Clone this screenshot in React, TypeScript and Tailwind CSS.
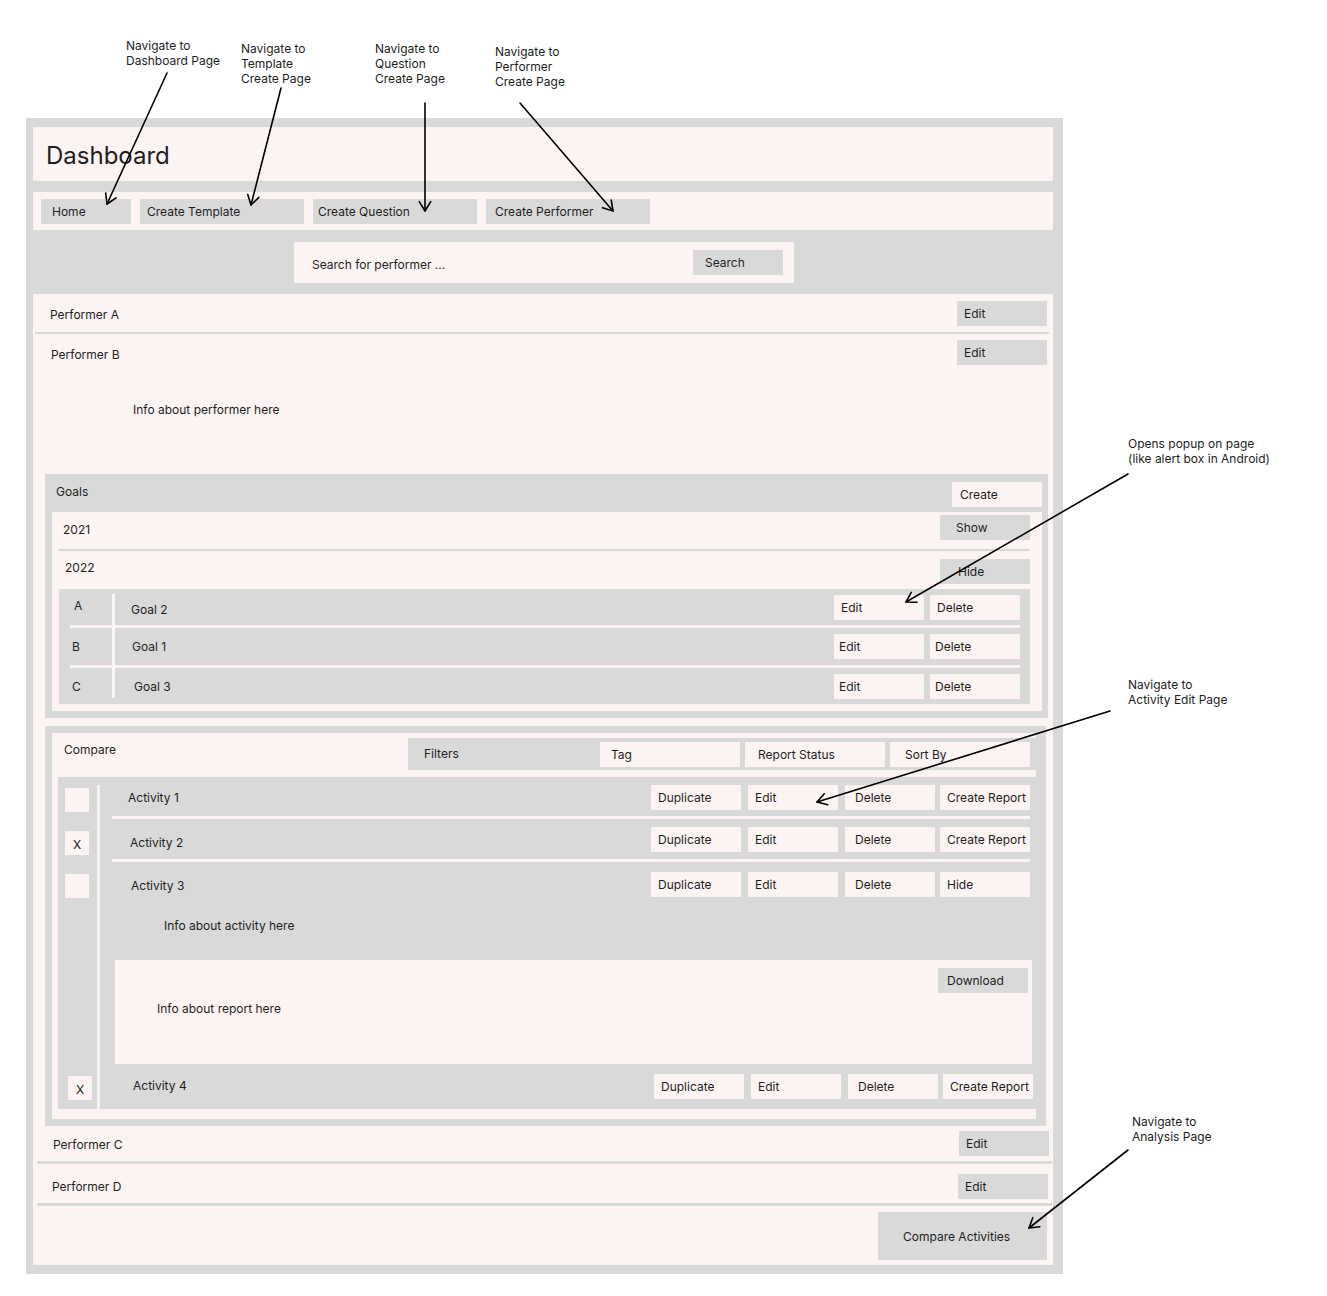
import React from 'react'

type ArrowProps = { x1: number; y1: number; x2: number; y2: number }

function Arrow({ x1, y1, x2, y2 }: ArrowProps) {
  const a = Math.atan2(y2 - y1, x2 - x1)
  const len = 11
  const s = 0.55
  const h1 = `${x2 - len * Math.cos(a - s)},${y2 - len * Math.sin(a - s)}`
  const h2 = `${x2 - len * Math.cos(a + s)},${y2 - len * Math.sin(a + s)}`
  return (
    <g>
      <line x1={x1} y1={y1} x2={x2} y2={y2} />
      <polyline points={`${h1} ${x2},${y2} ${h2}`} fill="none" />
    </g>
  )
}

function Btn({ label, className = '' }: { label: string; className?: string }) {
  return <div className={`h-[25px] w-[90px] shrink-0 flex items-center ${className}`}>{label}</div>
}

function Note({ lines, className }: { lines: string[]; className: string }) {
  return (
    <div className={`absolute ${className}`}>
      {lines.map((l) => (
        <div key={l}>{l}</div>
      ))}
    </div>
  )
}

function ActivityButtons({ last, className = '' }: { last: string; className?: string }) {
  return (
    <div className={`flex ${className}`}>
      <Btn label="Duplicate" className="bg-[#fcf3f3] pl-[7px]" />
      <Btn label="Edit" className="bg-[#fcf3f3] pl-[7px] ml-[7px]" />
      <Btn label="Delete" className="bg-[#fcf3f3] pl-[10px] ml-[7px]" />
      <Btn label={last} className="bg-[#fcf3f3] pl-[7px] ml-[5px]" />
    </div>
  )
}

export default function App() {
  return (
    <div className="relative w-[1327px] h-[1296px] bg-white text-[12px] leading-[15px] text-[#1e1e1e] font-['Inter',sans-serif]">
      {/* annotations */}
      <Note lines={['Navigate to', 'Dashboard Page']} className="left-[126px] top-[38px]" />
      <Note lines={['Navigate to', 'Template', 'Create Page']} className="left-[241px] top-[41px]" />
      <Note lines={['Navigate to', 'Question', 'Create Page']} className="left-[375px] top-[41px]" />
      <Note lines={['Navigate to', 'Performer', 'Create Page']} className="left-[495px] top-[44px]" />
      <Note lines={['Opens popup on page', '(like alert box in Android)']} className="left-[1128px] top-[436px]" />
      <Note lines={['Navigate to', 'Activity Edit Page']} className="left-[1128px] top-[677px]" />
      <Note lines={['Navigate to', 'Analysis Page']} className="left-[1132px] top-[1114px]" />

      <div className="pt-[118px] pl-[26px]">
        <div className="w-[1037px] bg-[#d9d9d9] pt-[9px] pb-[9px] pl-[7px] pr-[10px]">
          {/* title */}
          <div className="h-[54px] bg-[#fcf3f3] flex items-center pl-[13px] pt-[4px] text-[24px] leading-[30px]">Dashboard</div>

          {/* nav */}
          <div className="mt-[11px] h-[38px] bg-[#fcf3f3] flex items-center pl-[8px]">
            <Btn label="Home" className="bg-[#d9d9d9] pl-[11px]" />
            <Btn label="Create Template" className="bg-[#d9d9d9] pl-[7px] w-[164px] ml-[9px]" />
            <Btn label="Create Question" className="bg-[#d9d9d9] pl-[5px] w-[164px] ml-[9px]" />
            <Btn label="Create Performer" className="bg-[#d9d9d9] pl-[9px] w-[164px] ml-[9px]" />
          </div>

          {/* search */}
          <div className="h-[64px] pt-[12px] pl-[261px]">
            <div className="w-[500px] h-[41px] bg-[#fcf3f3] flex items-center justify-between pl-[18px] pr-[11px]">
              <span className="mt-[3px]">Search for performer ...</span>
              <Btn label="Search" className="bg-[#d9d9d9] pl-[12px]" />
            </div>
          </div>

          {/* performers */}
          <div className="bg-[#fcf3f3] pb-[5px]">
            <div className="h-[38px] flex items-center justify-between pl-[17px] pr-[6px]">
              <span className="mt-[3px]">Performer A</span>
              <Btn label="Edit" className="bg-[#d9d9d9] pl-[7px]" />
            </div>
            <div className="h-[2px] bg-[#d9d9d9] ml-[2px] mr-[4px]" />

            <div className="h-[140px]">
              <div className="flex items-center justify-between pt-[6px] pl-[18px] pr-[6px]">
                <span className="mt-[4px]">Performer B</span>
                <Btn label="Edit" className="bg-[#d9d9d9] pl-[7px]" />
              </div>
              <div className="mt-[37px] pl-[100px]">Info about performer here</div>
            </div>

            {/* goals */}
            <div className="ml-[12px] w-[1003px] bg-[#d9d9d9] pb-[7px]">
              <div className="h-[38px] flex items-start justify-between pt-[8px] pl-[11px] pr-[6px]">
                <span className="mt-[2px]">Goals</span>
                <Btn label="Create" className="bg-[#fcf3f3] pl-[8px]" />
              </div>
              <div className="ml-[7px] w-[990px] bg-[#fcf3f3] pb-[7px]">
                <div className="h-[37px] flex items-start justify-between pt-[3px] pl-[11px] pr-[12px]">
                  <span className="mt-[7px]">2021</span>
                  <Btn label="Show" className="bg-[#d9d9d9] pl-[16px]" />
                </div>
                <div className="h-[2px] bg-[#d9d9d9] ml-[6px] mr-[12px]" />
                <div className="h-[38px] flex items-start justify-between pt-[8px] pl-[13px] pr-[12px]">
                  <span className="mt-[1px]">2022</span>
                  <Btn label="Hide" className="bg-[#d9d9d9] pl-[18px]" />
                </div>

                <div className="ml-[7px] w-[971px] bg-[#d9d9d9]">
                  <div className="h-[36px] flex">
                    <div className="w-[53px] pl-[15px] pt-[9px]">A</div>
                    <div className="w-[3px] bg-[#fcf3f3] mt-[5px]" />
                    <div className="flex-1 flex items-center justify-between pl-[16px] pr-[10px]">
                      <span className="mt-[4px]">Goal 2</span>
                      <div className="flex gap-[6px]">
                        <Btn label="Edit" className="bg-[#fcf3f3] pl-[7px]" />
                        <Btn label="Delete" className="bg-[#fcf3f3] pl-[7px]" />
                      </div>
                    </div>
                  </div>
                  <div className="h-[3px] bg-[#fcf3f3] ml-[11px] mr-[10px]" />
                  <div className="h-[37px] flex">
                    <div className="w-[53px] pl-[13px] flex items-center">B</div>
                    <div className="w-[3px] bg-[#fcf3f3]" />
                    <div className="flex-1 flex items-center justify-between pl-[17px] pr-[10px]">
                      <span>Goal 1</span>
                      <div className="flex gap-[6px]">
                        <Btn label="Edit" className="bg-[#fcf3f3] pl-[5px]" />
                        <Btn label="Delete" className="bg-[#fcf3f3] pl-[5px]" />
                      </div>
                    </div>
                  </div>
                  <div className="h-[3px] bg-[#fcf3f3] ml-[11px] mr-[10px]" />
                  <div className="h-[36px] flex">
                    <div className="w-[53px] pl-[13px] flex items-center">C</div>
                    <div className="w-[3px] bg-[#fcf3f3] mb-[6px]" />
                    <div className="flex-1 flex items-center justify-between pl-[19px] pr-[10px]">
                      <span>Goal 3</span>
                      <div className="flex gap-[6px]">
                        <Btn label="Edit" className="bg-[#fcf3f3] pl-[5px]" />
                        <Btn label="Delete" className="bg-[#fcf3f3] pl-[5px]" />
                      </div>
                    </div>
                  </div>
                </div>
              </div>
            </div>

            {/* compare */}
            <div className="mt-[8px] ml-[12px] w-[1001px] bg-[#d9d9d9] pt-[7px] pb-[7px] pl-[7px] pr-[10px]">
              <div className="bg-[#fcf3f3] pb-[10px]">
                <div className="pt-[5px] flex items-start">
                  <span className="pl-[12px] pt-[4px]">Compare</span>
                  <div className="ml-auto w-[628px] h-[32px] bg-[#d9d9d9] flex items-center pl-[16px] pr-[6px]">
                    <span className="-mt-[1px]">Filters</span>
                    <div className="ml-auto flex gap-[5px]">
                      <Btn label="Tag" className="bg-[#fcf3f3] w-[140px] pl-[11px]" />
                      <Btn label="Report Status" className="bg-[#fcf3f3] w-[140px] pl-[13px]" />
                      <Btn label="Sort By" className="bg-[#fcf3f3] w-[140px] pl-[15px]" />
                    </div>
                  </div>
                </div>

                <div className="mt-[7px] ml-[6px] w-[978px] h-[332px] bg-[#d9d9d9] flex">
                  <div className="w-[39px] flex flex-col">
                    <div className="ml-[7px] mt-[11px] w-[24px] h-[24px] bg-[#fcf3f3]" />
                    <div className="ml-[7px] mt-[19px] w-[24px] h-[24px] bg-[#fcf3f3] flex items-center justify-center pt-[3px]">X</div>
                    <div className="ml-[7px] mt-[19px] w-[24px] h-[24px] bg-[#fcf3f3]" />
                    <div className="ml-[10px] mt-auto mb-[9px] w-[24px] h-[24px] bg-[#fcf3f3] flex items-center justify-center pt-[3px]">X</div>
                  </div>
                  <div className="w-[3px] bg-[#fcf3f3] mt-[8px]" />
                  <div className="flex-1 flex flex-col">
                    <div className="h-[39px] flex items-start justify-between pt-[8px] pl-[28px] pr-[6px]">
                      <span className="mt-[5px]">Activity 1</span>
                      <ActivityButtons last="Create Report" />
                    </div>
                    <div className="h-[3px] bg-[#fcf3f3] ml-[12px] mr-[6px]" />
                    <div className="h-[40px] flex items-start justify-between pt-[8px] pl-[30px] pr-[6px]">
                      <span className="mt-[8px]">Activity 2</span>
                      <ActivityButtons last="Create Report" />
                    </div>
                    <div className="h-[3px] bg-[#fcf3f3] ml-[12px] mr-[6px]" />
                    <div className="h-[98px] pt-[10px]">
                      <div className="flex items-start justify-between pl-[31px] pr-[6px]">
                        <span className="mt-[6px]">Activity 3</span>
                        <ActivityButtons last="Hide" />
                      </div>
                      <div className="mt-[21px] pl-[64px]">Info about activity here</div>
                    </div>
                    <div className="h-[104px] ml-[15px] mr-[4px] bg-[#fcf3f3] flex items-start justify-between pt-[8px] pl-[42px] pr-[4px]">
                      <span className="mt-[33px]">Info about report here</span>
                      <Btn label="Download" className="bg-[#d9d9d9] pl-[9px]" />
                    </div>
                    <div className="h-[45px] flex items-start justify-between pt-[10px] pl-[33px] pr-[3px]">
                      <span className="mt-[4px]">Activity 4</span>
                      <ActivityButtons last="Create Report" />
                    </div>
                  </div>
                </div>
              </div>
            </div>

            <div className="h-[35px] flex items-center justify-between pl-[20px] pr-[4px]">
              <span className="mt-[2px]">Performer C</span>
              <Btn label="Edit" className="bg-[#d9d9d9] w-[88px] h-[24px] pl-[7px]" />
            </div>
            <div className="h-[3px] bg-[#d9d9d9] ml-[4px] mr-[1px]" />
            <div className="h-[39px] flex items-start justify-between pt-[10px] pl-[19px] pr-[5px]">
              <span className="mt-[5px]">Performer D</span>
              <Btn label="Edit" className="bg-[#d9d9d9] w-[88px] h-[24px] pl-[7px]" />
            </div>
            <div className="h-[3px] bg-[#d9d9d9] ml-[4px] mr-[1px]" />
            <div className="flex justify-end pt-[6px] pr-[6px]">
              <div className="w-[169px] h-[48px] bg-[#d9d9d9] flex items-center pl-[25px]">Compare Activities</div>
            </div>
          </div>
        </div>
      </div>

      {/* arrows */}
      <svg className="absolute left-0 top-0 pointer-events-none" width="1327" height="1296" stroke="#000" strokeWidth="1.6" strokeLinecap="round" strokeLinejoin="round">
        <Arrow x1={167} y1={73} x2={107} y2={204} />
        <Arrow x1={281} y1={88} x2={251} y2={205} />
        <Arrow x1={425} y1={103} x2={425} y2={211} />
        <Arrow x1={520} y1={103} x2={613} y2={211} />
        <Arrow x1={1128} y1={474} x2={906} y2={602} />
        <Arrow x1={1110} y1={711} x2={817} y2={802} />
        <Arrow x1={1128} y1={1150} x2={1029} y2={1228} />
      </svg>
    </div>
  )
}
